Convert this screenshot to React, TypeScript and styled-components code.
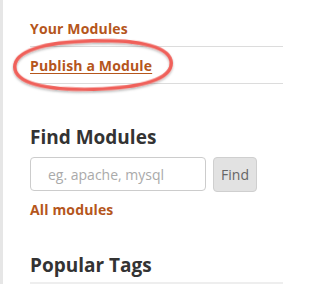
import React from "react";
import styled, { createGlobalStyle } from "styled-components";

const Global = createGlobalStyle`
  html, body { margin: 0; padding: 0; background: #fff; }
  body { font-family: "Open Sans", "Liberation Sans", Arial, sans-serif; }
  * { box-sizing: border-box; }
`;

const Sidebar = styled.aside`
  position: relative;
  width: 330px;
  height: 284px;
  overflow: hidden;
  border-left: 3px solid #e6e6e6;
  padding: 10px 47px 0 27px;
`;

const NavList = styled.ul`
  list-style: none;
  margin: 0;
  padding: 0;
`;

const NavItem = styled.li`
  border-bottom: 1px solid #dcdcdc;
  padding: 8px 0 7px;
  line-height: 20px;
`;

const Link = styled.a<{ $underline?: boolean }>`
  color: #b5561c;
  font-weight: 700;
  font-size: 14px;
  line-height: 20px;
  letter-spacing: 0.15px;
  text-decoration: ${(p) => (p.$underline ? "underline" : "none")};
  text-underline-offset: 2px;
`;

const Heading = styled.h3`
  margin: 0;
  color: #333;
  font-size: 19px;
  font-weight: 700;
  line-height: 24px;
`;

const FindSection = styled.section`
  margin-top: 41px;
  display: flex;
  flex-direction: column;
  align-items: flex-start;
  gap: 8px;
`;

const SearchRow = styled.form`
  display: flex;
  gap: 7px;
  align-items: flex-start;
  margin: 0;
`;

const Input = styled.input`
  width: 176px;
  height: 34px;
  border: 1px solid #ccc;
  border-radius: 4px;
  padding: 0 10px 0 17px;
  font-family: inherit;
  font-size: 14px;
  color: #555;
  &::placeholder { color: #aaa; }
`;

const Button = styled.button`
  width: 44px;
  height: 35px;
  border: 1px solid #cfcfcf;
  border-radius: 4px;
  background: #e2e2e2;
  color: #666;
  font-family: inherit;
  font-size: 14px;
  padding: 0;
`;

const TagsSection = styled.section`
  margin-top: 33px;
`;

const TagsHeading = styled(Heading)`
  padding-bottom: 5px;
  border-bottom: 4px solid #eee;
`;

const Annotation = styled.svg`
  position: absolute;
  left: 0;
  top: 0;
  pointer-events: none;
`;

const a = 78.25;
const b = 24.25;
const k = 0.64;
const ovalPath = `M ${-a} 0 C ${-a} ${-k * b} ${-k * a} ${-b} 0 ${-b} C ${k * a} ${-b} ${a} ${-k * b} ${a} 0 C ${a} ${k * b} ${k * a} ${b} 0 ${b} C ${-k * a} ${b} ${-a} ${k * b} ${-a} 0 Z`;

export default function App() {
  return (
    <>
      <Global />
      <Sidebar>
        <NavList>
          <NavItem>
            <Link href="#">Your Modules</Link>
          </NavItem>
          <NavItem>
            <Link href="#" $underline>
              Publish a Module
            </Link>
          </NavItem>
        </NavList>
        <FindSection>
          <Heading>Find Modules</Heading>
          <SearchRow onSubmit={(e) => e.preventDefault()}>
            <Input placeholder="eg. apache, mysql" />
            <Button type="submit">Find</Button>
          </SearchRow>
          <Link href="#">All modules</Link>
        </FindSection>
        <TagsSection>
          <TagsHeading>Popular Tags</TagsHeading>
        </TagsSection>
        <Annotation width="330" height="284" viewBox="0 0 330 284">
          <defs>
            <filter id="sh" x="-10%" y="-30%" width="120%" height="160%">
              <feDropShadow dx="0" dy="1.5" stdDeviation="1.3" floodColor="#000" floodOpacity="0.3" />
            </filter>
          </defs>
          <path
            d={ovalPath}
            fill="none"
            stroke="#f0605a"
            strokeWidth="3.5"
            filter="url(#sh)"
            transform="translate(90 65) rotate(-1.5)"
          />
        </Annotation>
      </Sidebar>
    </>
  );
}
